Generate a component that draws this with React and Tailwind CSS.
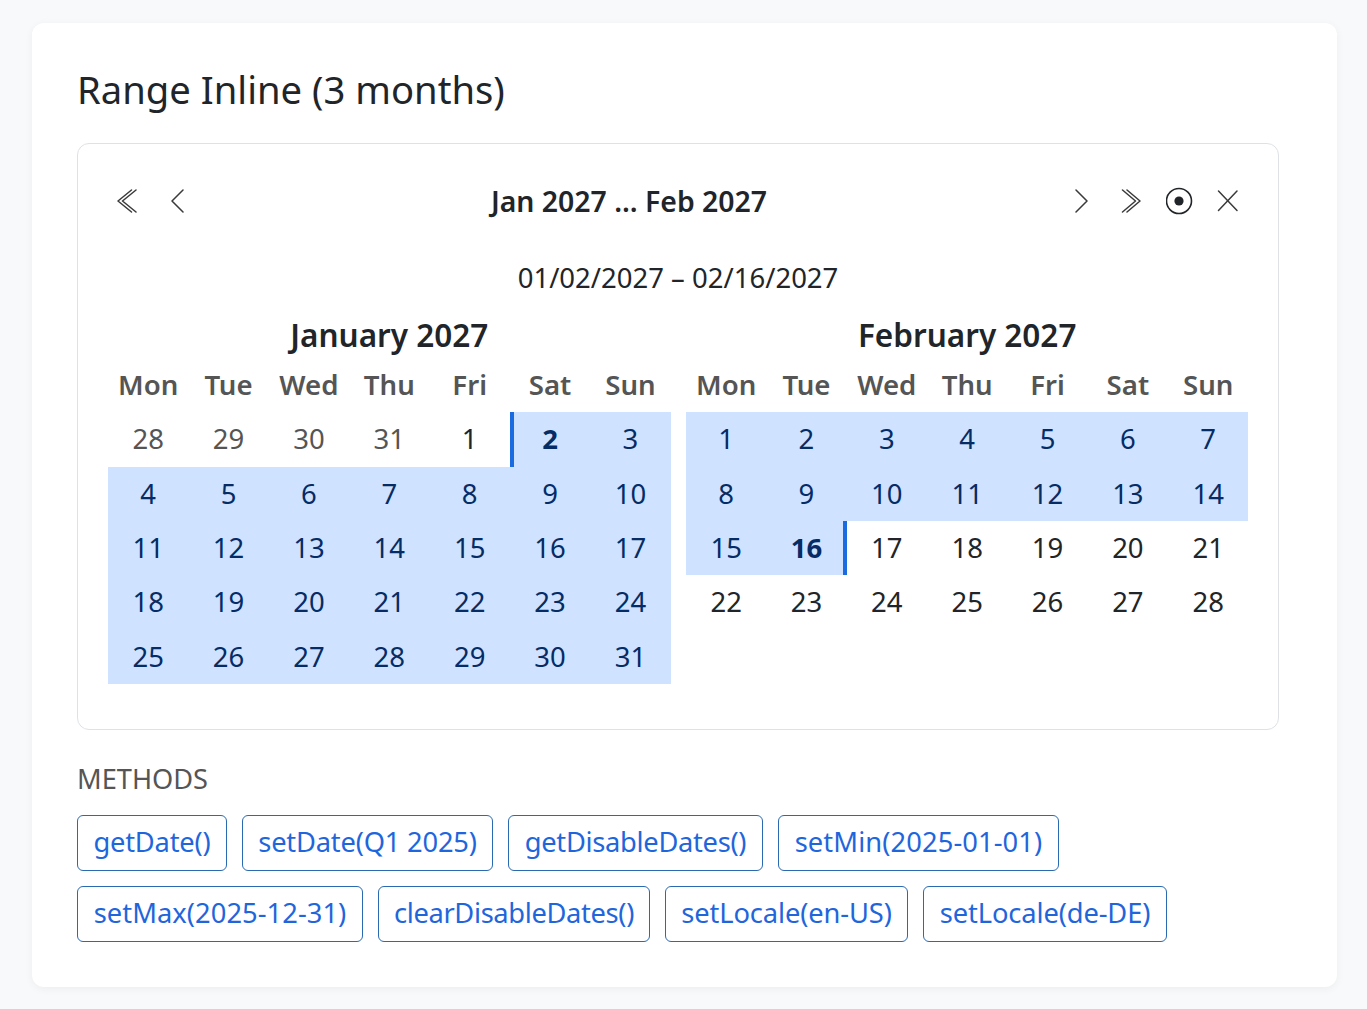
import React from 'react';

const weekdays = ['Mon', 'Tue', 'Wed', 'Thu', 'Fri', 'Sat', 'Sun'];

const january = [
  [{ d: 28, muted: true }, { d: 29, muted: true }, { d: 30, muted: true }, { d: 31, muted: true }, { d: 1 }, { d: 2, range: true, start: true }, { d: 3, range: true }],
  [4, 5, 6, 7, 8, 9, 10].map((d) => ({ d, range: true })),
  [11, 12, 13, 14, 15, 16, 17].map((d) => ({ d, range: true })),
  [18, 19, 20, 21, 22, 23, 24].map((d) => ({ d, range: true })),
  [25, 26, 27, 28, 29, 30, 31].map((d) => ({ d, range: true })),
];

const february = [
  [1, 2, 3, 4, 5, 6, 7].map((d) => ({ d, range: true })),
  [8, 9, 10, 11, 12, 13, 14].map((d) => ({ d, range: true })),
  [{ d: 15, range: true }, { d: 16, range: true, end: true }, { d: 17 }, { d: 18 }, { d: 19 }, { d: 20 }, { d: 21 }],
  [22, 23, 24, 25, 26, 27, 28].map((d) => ({ d })),
];

const methods = [
  [
    { label: 'getDate()', cls: 'w-[150px] tracking-[-0.2px]' },
    { label: 'setDate(Q1 2025)', cls: 'w-[251px] tracking-[-0.2px]' },
    { label: 'getDisableDates()', cls: 'w-[255px] tracking-[-0.3px]' },
    { label: 'setMin(2025-01-01)', cls: 'w-[281px] tracking-[0.1px]' },
  ],
  [
    { label: 'setMax(2025-12-31)', cls: 'w-[286px] tracking-[0.05px]' },
    { label: 'clearDisableDates()', cls: 'w-[272px] tracking-[-0.35px]' },
    { label: 'setLocale(en-US)', cls: 'w-[243px] tracking-[-0.12px]' },
    { label: 'setLocale(de-DE)', cls: 'w-[244px] tracking-[-0.12px]' },
  ],
];

function NavIcon({ children }) {
  return (
    <button type="button" className="flex h-[48px] w-[50px] items-center justify-center text-[#3a3a3a]">
      <svg width="24" height="24" viewBox="0 0 24 24" fill="none" stroke="currentColor" strokeWidth="1.5" strokeLinecap="round" strokeLinejoin="round">
        {children}
      </svg>
    </button>
  );
}

function Month({ title, rows }) {
  return (
    <div>
      <div className="text-center text-[31.5px] leading-[40px] font-semibold text-[#212529]">{title}</div>
      <div className="mt-[4px] grid h-[53.4px] grid-cols-7 items-center pb-[2px] text-center text-[27.6px] font-semibold text-[#555]">
        {weekdays.map((w) => (
          <div key={w}>{w}</div>
        ))}
      </div>
      {rows.map((row, i) => (
        <div key={i} className="grid h-[54.3px] grid-cols-7 text-center text-[27.5px] leading-[53px]">
          {row.map((c) => {
            let cls = c.muted ? 'text-[#555]' : 'text-[#212529]';
            if (c.range) cls = 'bg-[#cfe2ff] text-[#052c65]';
            if (c.start) cls += ' border-l-[4px] border-[#1a6be0] pr-[4px] font-bold';
            if (c.end) cls += ' border-r-[4px] border-[#1a6be0] pl-[4px] font-bold';
            return (
              <div key={c.d} className={cls}>
                {c.d}
              </div>
            );
          })}
        </div>
      ))}
    </div>
  );
}

export default function App() {
  return (
    <div className="min-h-screen bg-[#f8f9fa] pt-[23px] pb-[22px] font-['Noto_Sans',sans-serif]">
      <div className="ml-[32px] w-[1305px] rounded-xl bg-white px-[45px] pt-[41px] pb-[45px] shadow-[0_2px_8px_rgba(0,0,0,0.05)]">
        <h2 className="mb-[29px] text-[38.2px] leading-[50px] text-[#212529]">Range Inline (3 months)</h2>

        <div className="h-[587px] w-[1202px] rounded-xl border border-[#dee2e6] px-[30px] pt-[33px]">
          <div className="-mr-[4px] -ml-[6px] flex items-center justify-between">
            <div className="flex">
              <NavIcon>
                <path d="M16.5 1 L3 12 L16.5 23" />
                <path d="M21 1 L7.5 12 L21 23" />
              </NavIcon>
              <NavIcon>
                <path d="M18 1 L7 12 L18 23" />
              </NavIcon>
            </div>
            <div className="text-[28.4px] font-semibold text-[#212529]">Jan 2027 ... Feb 2027</div>
            <div className="flex">
              <NavIcon>
                <path d="M7 1 L18 12 L7 23" />
              </NavIcon>
              <NavIcon>
                <path d="M3.5 1 L16.5 12 L3.5 23" />
                <path d="M8 1 L21 12 L8 23" />
              </NavIcon>
              <div className="flex h-[48px] w-[48px] items-center justify-center">
                <svg width="28" height="28" viewBox="0 0 28 28" fill="none">
                  <circle cx="13" cy="14" r="12.5" stroke="#212529" strokeWidth="1.6" />
                  <circle cx="13" cy="14" r="4.6" fill="#212529" />
                </svg>
              </div>
              <div className="flex h-[48px] w-[48px] items-center justify-center text-[#3a3a3a]">
                <svg width="24" height="24" viewBox="0 0 24 24" fill="none" stroke="currentColor" strokeWidth="1.5" strokeLinecap="round">
                  <path d="M2.5 2 L21 21.5" />
                  <path d="M21 2 L2.5 21.5" />
                </svg>
              </div>
            </div>
          </div>

          <div className="mt-[33px] text-center text-[27.5px] leading-[40px] text-[#212529]">01/02/2027 – 02/16/2027</div>

          <div className="mt-[17px] grid grid-cols-[562.6px_562.4px] gap-x-[15.4px]">
            <Month title="January 2027" rows={january} />
            <Month title="February 2027" rows={february} />
          </div>
        </div>

        <div className="mt-[34px] mb-[21px] text-[27.2px] leading-[30px] text-[#555]">METHODS</div>

        <div className="flex flex-col gap-[15px]">
          {methods.map((row, i) => (
            <div key={i} className="flex gap-[15px]">
              {row.map((m) => (
                <button
                  key={m.label}
                  type="button"
                  className={`h-[56px] rounded-md border border-[#2a6ab0] pb-[1px] text-[27.3px] text-[#1f66dc] ${m.cls}`}
                >
                  {m.label}
                </button>
              ))}
            </div>
          ))}
        </div>
      </div>
    </div>
  );
}
